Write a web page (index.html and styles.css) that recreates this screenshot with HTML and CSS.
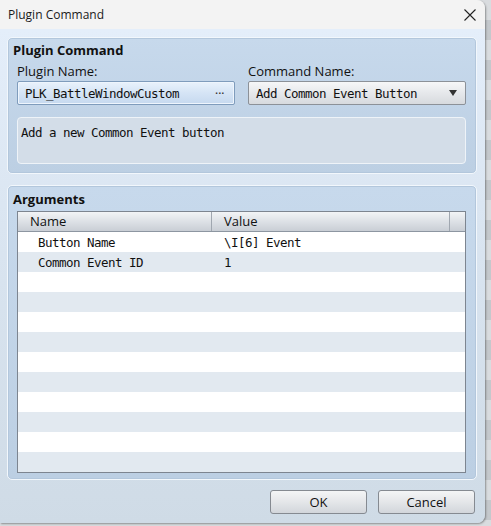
FILE: index.html
```html
<!DOCTYPE html>
<html lang="en">
<head>
  <meta charset="UTF-8">
  <meta name="viewport" content="width=device-width, initial-scale=1.0">
  <title>Plugin Command</title>
  <link rel="stylesheet" href="styles.css">
</head>
<body>
  <div id="dialog">
    <div class="titlebar">
      <span class="caption">Plugin Command</span>
      <svg class="close" width="12" height="12" viewBox="0 0 12 12">
        <path d="M0.5 0.5 L11.5 11.5 M11.5 0.5 L0.5 11.5" stroke="#222" stroke-width="1.1" fill="none"/>
      </svg>
    </div>

    <div class="client">
      <div class="group group-command">
        <div class="group-title">Plugin Command</div>
        <div class="fields">
          <div class="field">
            <div class="label">Plugin Name:</div>
            <div class="picker">
              <span class="mono">PLK_BattleWindowCustom</span>
              <span class="dots">&middot;&middot;&middot;</span>
            </div>
          </div>
          <div class="field">
            <div class="label">Command Name:</div>
            <div class="combo">
              <span class="mono">Add Common Event Button</span>
              <span class="arrow"></span>
            </div>
          </div>
        </div>
        <div class="description mono">Add a new Common Event button</div>
      </div>

      <div class="group group-args">
        <div class="group-title">Arguments</div>
        <div class="table">
          <div class="thead">
            <div class="th col-name">Name</div>
            <div class="th col-value">Value</div>
            <div class="th col-rest"></div>
          </div>
          <div class="tbody">
            <div class="tr"><div class="td col-name mono">Button Name</div><div class="td col-value mono">\I[6] Event</div></div>
            <div class="tr"><div class="td col-name mono">Common Event ID</div><div class="td col-value mono">1</div></div>
            <div class="tr"></div>
            <div class="tr"></div>
            <div class="tr"></div>
            <div class="tr"></div>
            <div class="tr"></div>
            <div class="tr"></div>
            <div class="tr"></div>
            <div class="tr"></div>
            <div class="tr"></div>
            <div class="tr"></div>
          </div>
        </div>
      </div>

      <div class="buttons">
        <div class="button">OK</div>
        <div class="button">Cancel</div>
      </div>
    </div>
  </div>
</body>
</html>
```

FILE: styles.css
```css
html, body, div {
  margin: 0;
  padding: 0;
}

body {
  width: 491px;
  height: 526px;
  overflow: hidden;
  background: repeating-linear-gradient(to bottom, #d9dcdf 0px, #d9dcdf 20px, #c4c8cc 20px, #c4c8cc 40px);
  font-family: "Open Sans", "Noto Sans", sans-serif;
  color: #111;
}

#dialog {
  width: 485px;
  height: 523px;
  display: flex;
  flex-direction: column;
  border-radius: 0 8px 8px 0;
  overflow: hidden;
  box-shadow: 1px 1px 2px rgba(0, 0, 0, 0.35);
}

.titlebar {
  height: 29px;
  flex: none;
  background: #f3f3f3;
  display: flex;
  align-items: center;
  justify-content: space-between;
  padding: 0 9px 0 8px;
}

.caption {
  font-size: 12px;
  color: #1a1a1a;
}

.close {
  display: block;
}

.client {
  flex: 1;
  background: linear-gradient(to bottom, #e4eefa 0%, #dae5f1 40%, #cfdbe6 100%);
  padding: 8px 10px 0 7px;
  display: flex;
  flex-direction: column;
}

.group {
  box-sizing: border-box;
  border: 1px solid #f2f7fc;
  border-radius: 5px;
  background: linear-gradient(to bottom, #c7d9ec 0%, #bccfe3 100%);
  box-shadow: inset 0 0 0 1px #b3c7dc;
  margin-right: -2px;
}

.group-title {
  font-weight: bold;
  font-size: 13px;
  line-height: 16px;
  padding-left: 5px;
}

.group-command {
  height: 137px;
  padding-top: 4px;
}

.fields {
  display: flex;
  gap: 13px;
  padding: 5px 0 0 9px;
}

.field {
  width: 218px;
}

.label {
  font-size: 13px;
  line-height: 16px;
  padding-bottom: 2px;
}

.mono {
  font-family: "DejaVu Sans Mono", "Liberation Mono", monospace;
  font-size: 12.5px;
  letter-spacing: -0.53px;
  color: #111;
}

.picker, .combo {
  height: 24px;
  box-sizing: border-box;
  display: flex;
  align-items: center;
  justify-content: space-between;
  padding: 0 7px;
  border-radius: 2px;
}

.picker {
  border: 1px solid #7f9cbc;
  background: linear-gradient(to bottom, #e9f2fc 0%, #d5e4f5 50%, #c6d9ef 100%);
  box-shadow: inset 0 0 0 1px #eef5fd;
}

.dots {
  font-family: "DejaVu Sans", sans-serif;
  font-size: 13px;
  letter-spacing: -1px;
  color: #333;
  margin-right: 3px;
}

.combo {
  border: 1px solid #8c9198;
  background: linear-gradient(to bottom, #f6f7f8 0%, #e6e8eb 50%, #d7dade 100%);
}

.arrow {
  width: 0;
  height: 0;
  border-left: 4px solid transparent;
  border-right: 4px solid transparent;
  border-top: 6px solid #333;
  margin-right: 1px;
}

.description {
  margin: 12px 10px 0 9px;
  height: 47px;
  box-sizing: border-box;
  background: #d3dde8;
  border: 1px solid #eef3f8;
  border-radius: 4px;
  padding: 7px 3px;
}

.group-args {
  margin-top: 11px;
  height: 295px;
  padding-top: 5px;
}

.table {
  margin: 4px 10px 0 9px;
  border: 1px solid #7d8590;
  background: #fff;
}

.thead {
  display: flex;
  height: 19px;
  border-bottom: 1px solid #8d96a1;
  background: linear-gradient(to bottom, #f2f4f6 0%, #dde1e6 50%, #c9ced5 100%);
}

.th {
  font-size: 13px;
  line-height: 19px;
  box-sizing: border-box;
}

.col-name {
  width: 194px;
  padding-left: 12px;
  border-right: 1px solid #a0a7b0;
}

.td.col-name {
  padding-left: 20px;
  border-right: none;
}

.col-value {
  width: 238px;
  padding-left: 12px;
  border-right: 1px solid #a0a7b0;
}

.td.col-value {
  border-right: none;
}

.col-rest {
  flex: 1;
}

.tr {
  height: 20px;
  display: flex;
  background: #fff;
}

.tr:nth-child(even) {
  background: #e2e9f0;
}

.td {
  line-height: 21px;
  box-sizing: border-box;
}

.buttons {
  display: flex;
  justify-content: flex-end;
  gap: 11px;
  margin-top: 10px;
}

.button {
  width: 97px;
  height: 24px;
  box-sizing: border-box;
  border: 1px solid #858a91;
  border-radius: 3px;
  background: linear-gradient(to bottom, #f4f5f6 0%, #e4e6e9 50%, #d2d6db 100%);
  font-size: 13px;
  line-height: 22px;
  text-align: center;
}
```
